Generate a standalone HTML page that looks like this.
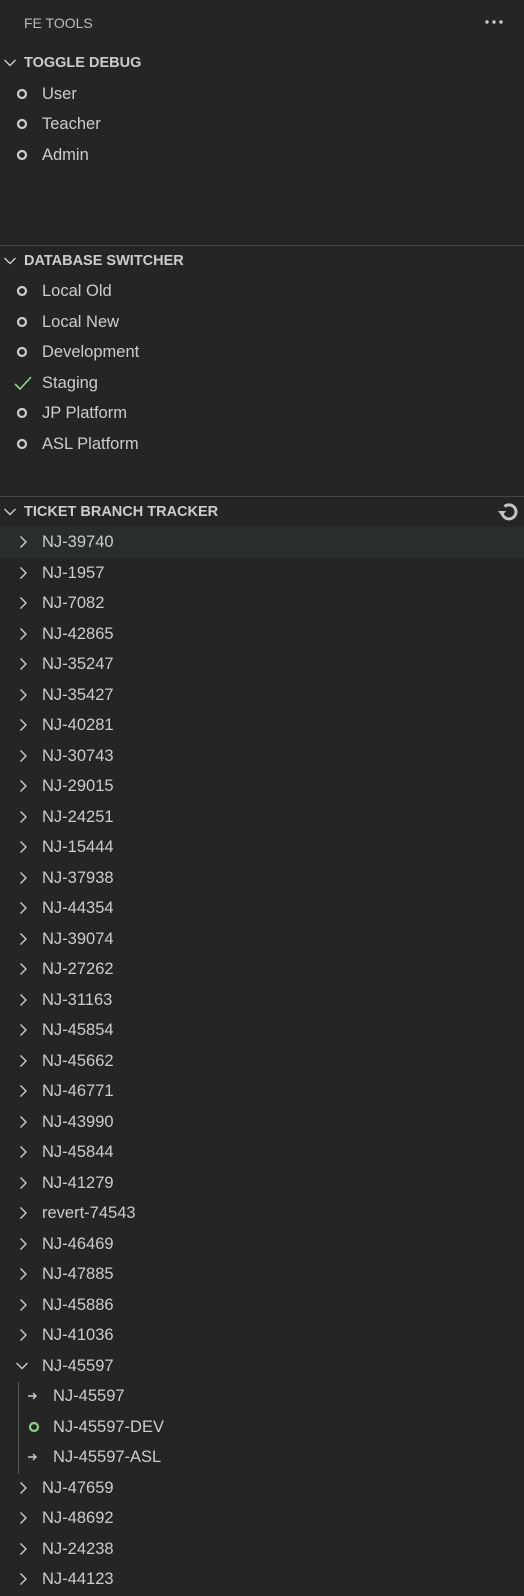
<!DOCTYPE html>
<html><head><style>
*{margin:0;padding:0;box-sizing:border-box}
body{width:524px;height:1596px;background:#252526;color:#cccccc;font-family:"Liberation Sans",sans-serif;overflow:hidden;position:relative}
.a{position:absolute;left:0;width:524px}
.t{position:absolute;font-size:16.5px;line-height:30px;white-space:nowrap}
.h{position:absolute;left:24px;font-size:14.5px;font-weight:bold;line-height:20px;color:#cccccc}
.sep{position:absolute;left:0;width:524px;height:1px;background:#474747}
svg{position:absolute}
</style></head><body>
<div class="t" style="left:24px;top:8px;font-size:14px;color:#bbbbbb">FE TOOLS</div>
<svg style="left:484px;top:18px" width="22" height="8"><circle cx="3" cy="4" r="1.7" fill="#ccc"/><circle cx="10" cy="4" r="1.7" fill="#ccc"/><circle cx="17" cy="4" r="1.7" fill="#ccc"/></svg>
<div id="c"></div>
<script>
var c=document.getElementById('c'),h='';
function chev(y,down,x){x=x||3;return down?'<svg style="left:'+x+'px;top:'+(y-5)+'px" width="14" height="10"><path d="M1.5 2 L7 7.5 L12.5 2" stroke="#ccc" stroke-width="1.4" fill="none"/></svg>':'<svg style="left:'+x+'px;top:'+(y-7)+'px" width="10" height="14"><path d="M2.5 1.5 L8 7 L2.5 12.5" stroke="#ccc" stroke-width="1.4" fill="none"/></svg>';}
function head(y,t){h+=chev(y,1);h+='<div class="h" style="top:'+(y-10)+'px">'+t+'</div>';}
function radio(y,col,x){h+='<svg style="left:'+(x||16)+'px;top:'+(y-6)+'px" width="12" height="12"><circle cx="6" cy="6" r="4" stroke="'+(col||'#ccc')+'" stroke-width="2.2" fill="none"/></svg>';}
function txt(y,x,t){h+='<div class="t" style="left:'+x+'px;top:'+(y-15)+'px">'+t+'</div>';}
head(63,'TOGGLE DEBUG');
['User','Teacher','Admin'].forEach(function(t,i){var y=93.5+i*30.5;radio(y);txt(y,42,t);});
h+='<div class="sep" style="top:245px"></div>';
head(261,'DATABASE SWITCHER');
['Local Old','Local New','Development','Staging','JP Platform','ASL Platform'].forEach(function(t,i){var y=291+i*30.5;if(t=='Staging')h+='<svg style="left:13px;top:'+(y-9)+'px" width="20" height="18"><path d="M2 10 L7 15 L18 3" stroke="#89d185" stroke-width="1.6" fill="none"/></svg>';else radio(y);txt(y,42,t);});
h+='<div class="sep" style="top:496px"></div>';
head(512,'TICKET BRANCH TRACKER');
h+='<svg style="left:496px;top:500px" width="24" height="24"><path d="M6 12 A7 7 0 1 0 8.5 6.5" stroke="#c5c5c5" stroke-width="3" fill="none"/><path d="M2 11 L10 11 L6 16 Z" fill="#c5c5c5"/></svg>';
h+='<div class="a" style="top:527px;height:30.5px;background:#2a2d2e"></div>';
var L=['NJ-39740','NJ-1957','NJ-7082','NJ-42865','NJ-35247','NJ-35427','NJ-40281','NJ-30743','NJ-29015','NJ-24251','NJ-15444','NJ-37938','NJ-44354','NJ-39074','NJ-27262','NJ-31163','NJ-45854','NJ-45662','NJ-46771','NJ-43990','NJ-45844','NJ-41279','revert-74543','NJ-46469','NJ-47885','NJ-45886','NJ-41036','*NJ-45597','>NJ-45597','oNJ-45597-DEV','>NJ-45597-ASL','NJ-47659','NJ-48692','NJ-24238','NJ-44123'];
L.forEach(function(t,i){var y=542+i*30.5;var k=t[0];
if(k=='>'||k=='o'){t=t.slice(1);if(k=='>')h+='<svg style="left:27px;top:'+(y-5)+'px" width="12" height="10"><path d="M1 5 H9 M6 2 L9 5 L6 8" stroke="#ccc" stroke-width="1.4" fill="none"/></svg>';else radio(y,'#89d185',28);txt(y,53,t);}
else if(k=='*'){t=t.slice(1);h+=chev(y,1,15);txt(y,42,t);}
else{h+=chev(y,0,18);txt(y,42,t);}});
h+='<div style="position:absolute;left:18px;top:1382px;width:1px;height:92px;background:#585858"></div>';
c.innerHTML=h;
</script>
</body></html>
